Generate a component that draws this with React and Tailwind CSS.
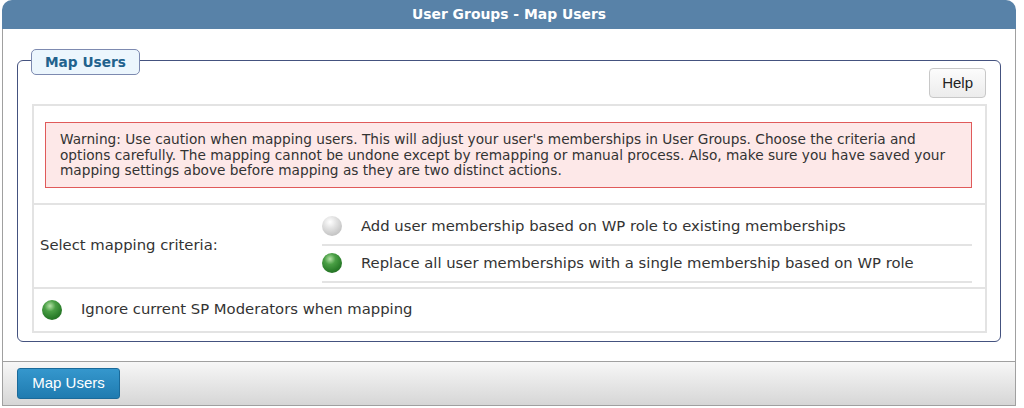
import React from 'react';

const Radio = ({ on }) => (
  <span
    className={`inline-block w-[20px] h-[20px] rounded-full shrink-0 ${
      on
        ? 'bg-[radial-gradient(circle_at_40%_30%,#b6e2a8_0%,#4a9f45_30%,#2a7d2a_65%,#1d5e1d_100%)]'
        : 'bg-[radial-gradient(circle_at_40%_30%,#ffffff_0%,#e2e2e2_35%,#c4c4c4_75%,#b0b0b0_100%)]'
    }`}
  />
);

const App = () => {
  return (
    <div className="w-[1024px] h-[408px] bg-white font-['DejaVu_Sans',Verdana,sans-serif] text-[#333]">
      <div className="ml-[2px] w-[1014px]">
        <div className="h-[29px] rounded-t-[10px] bg-[#5882a8] flex items-center justify-center">
          <span className="text-white font-bold text-[13.9px]">User Groups - Map Users</span>
        </div>

        <div className="border-x border-[#a0a0a0] bg-white pt-[31px] pb-[19px] px-[14px]">
          <div className="relative border border-[#44527f] rounded-[6px] pt-[7px] pl-[14px] pr-[13px] pb-[8px]">
            <div className="absolute left-[13px] top-[-12px] h-[26px] px-[13px] flex items-center rounded-[5px] border border-[#7d8ab0] bg-[#ecf6fd] text-[13.7px] font-bold text-[#22628d]">
              Map Users
            </div>

            <div className="flex justify-end pr-[1px]">
              <button className="h-[30px] px-[12px] rounded-[4px] border border-[#c8c8c8] bg-[linear-gradient(#fcfcfc,#ececec)] font-['Liberation_Sans',Arial,sans-serif] text-[15px] text-[#222]">
                Help
              </button>
            </div>

            <div className="mt-[6px] border-2 border-[#e3e3e3] text-[14.8px]">
              <div className="pt-[16px] pb-[15px] pl-[11px] pr-[13px] border-b-2 border-[#e3e3e3]">
                <div className="border border-[#e05a5a] bg-[#fde8e8] px-[14px] pt-[9px] pb-[8px] text-[13.7px] leading-[15.5px]">
                  Warning: Use caution when mapping users. This will adjust your user's memberships in User Groups. Choose the criteria and options carefully. The mapping cannot be undone except by remapping or manual process. Also, make sure you have saved your mapping settings above before mapping as they are two distinct actions.
                </div>
              </div>

              <div className="flex border-b-2 border-[#e3e3e3] pt-[4px] pb-[4px]">
                <div className="w-[288px] pl-[6px] flex items-center">Select mapping criteria:</div>
                <div className="flex-1 mr-[13px]">
                  <div className="flex items-center h-[37px] border-b-2 border-[#e3e3e3]">
                    <Radio />
                    <span className="ml-[19px]">Add user membership based on WP role to existing memberships</span>
                  </div>
                  <div className="flex items-center h-[37px] border-b-2 border-[#e3e3e3]">
                    <Radio on />
                    <span className="ml-[19px]">Replace all user memberships with a single membership based on WP role</span>
                  </div>
                </div>
              </div>

              <div className="flex items-center h-[42px] pl-[8px]">
                <Radio on />
                <span className="ml-[19px]">Ignore current SP Moderators when mapping</span>
              </div>
            </div>
          </div>
        </div>

        <div className="h-[45px] border border-[#a0a0a0] bg-[linear-gradient(#f7f7f7,#d6d6d6)] flex items-center pl-[14px]">
          <button className="w-[103px] h-[31px] rounded-[3px] border border-[#1a6a9a] bg-[linear-gradient(#3597cd,#1f7bb0)] font-['Liberation_Sans',Arial,sans-serif] text-[15px] text-white">
            Map Users
          </button>
        </div>
      </div>
    </div>
  );
};

export default App;
